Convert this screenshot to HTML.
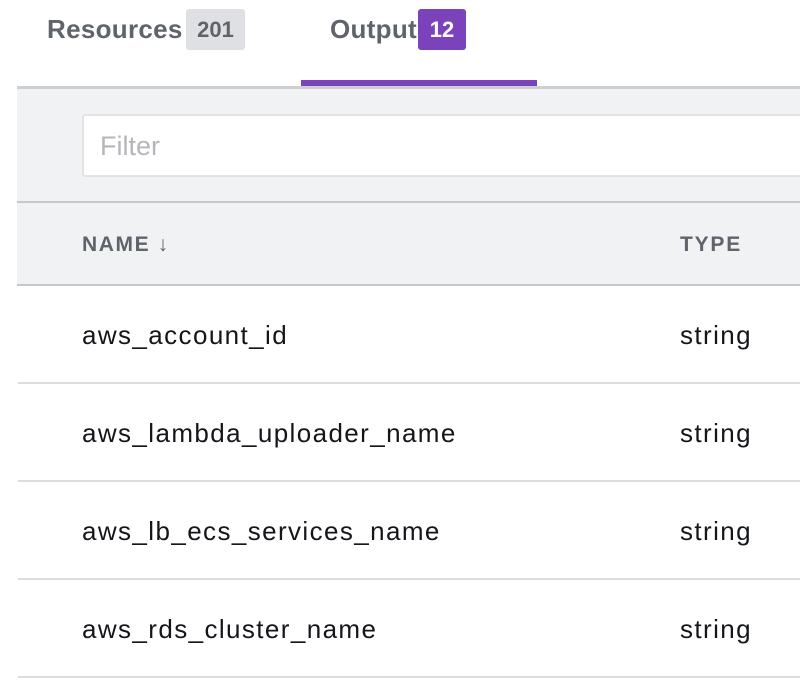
<!DOCTYPE html>
<html><head><meta charset="utf-8"><style>
body{margin:0;width:800px;height:698px;overflow:hidden;background:#fff;font-family:"Liberation Sans",sans-serif;position:relative}
.a{position:absolute}
.tab{font-size:26px;font-weight:bold;color:#5f636b;top:14px;letter-spacing:0.3px}
.badge{font-size:22px;font-weight:bold;border-radius:3px;text-align:center;line-height:41px;height:41px;top:9px}
.row{position:absolute;left:18px;width:782px;height:96px;border-bottom:2px solid #dcdde1}
.row span{position:absolute;top:34px;font-size:26px;color:#14161a;letter-spacing:1.4px}
</style></head><body>
<div class="a tab" style="left:47px">Resources</div>
<div class="a badge" style="left:186px;width:59px;background:#dfe0e4;color:#5f636b">201</div>
<div class="a tab" style="left:330px">Outputs</div>
<div class="a badge" style="left:418px;width:48px;background:#7b42bc;color:#fff">12</div>
<div class="a" style="left:301px;top:80px;width:236px;height:6px;background:#7b42bc"></div>
<div class="a" style="left:17px;top:86px;width:783px;height:199px;background:#f1f2f4;border-top:3px solid #cdcfd3;box-sizing:border-box"></div>
<div class="a" style="left:82px;top:114px;width:740px;height:63px;background:#fff;border:2px solid #e2e3e6;border-radius:3px;box-sizing:border-box"></div>
<div class="a" style="left:100px;top:131px;font-size:27px;color:#b4b6bb">Filter</div>
<div class="a" style="left:17px;top:201px;width:783px;height:2px;background:#c6c8cc"></div>
<div class="a" style="left:82px;top:233px;font-size:21px;font-weight:bold;color:#5f636b;letter-spacing:1.6px">NAME ↓</div>
<div class="a" style="left:680px;top:233px;font-size:21px;font-weight:bold;color:#5f636b;letter-spacing:1.8px">TYPE</div>
<div class="a" style="left:17px;top:284px;width:783px;height:2px;background:#c6c8cc"></div>
<div class="row" style="top:286px"><span style="left:64px">aws_account_id</span><span style="left:662px">string</span></div>
<div class="row" style="top:384px"><span style="left:64px">aws_lambda_uploader_name</span><span style="left:662px">string</span></div>
<div class="row" style="top:482px"><span style="left:64px">aws_lb_ecs_services_name</span><span style="left:662px">string</span></div>
<div class="row" style="top:580px"><span style="left:64px">aws_rds_cluster_name</span><span style="left:662px">string</span></div>
</body></html>
